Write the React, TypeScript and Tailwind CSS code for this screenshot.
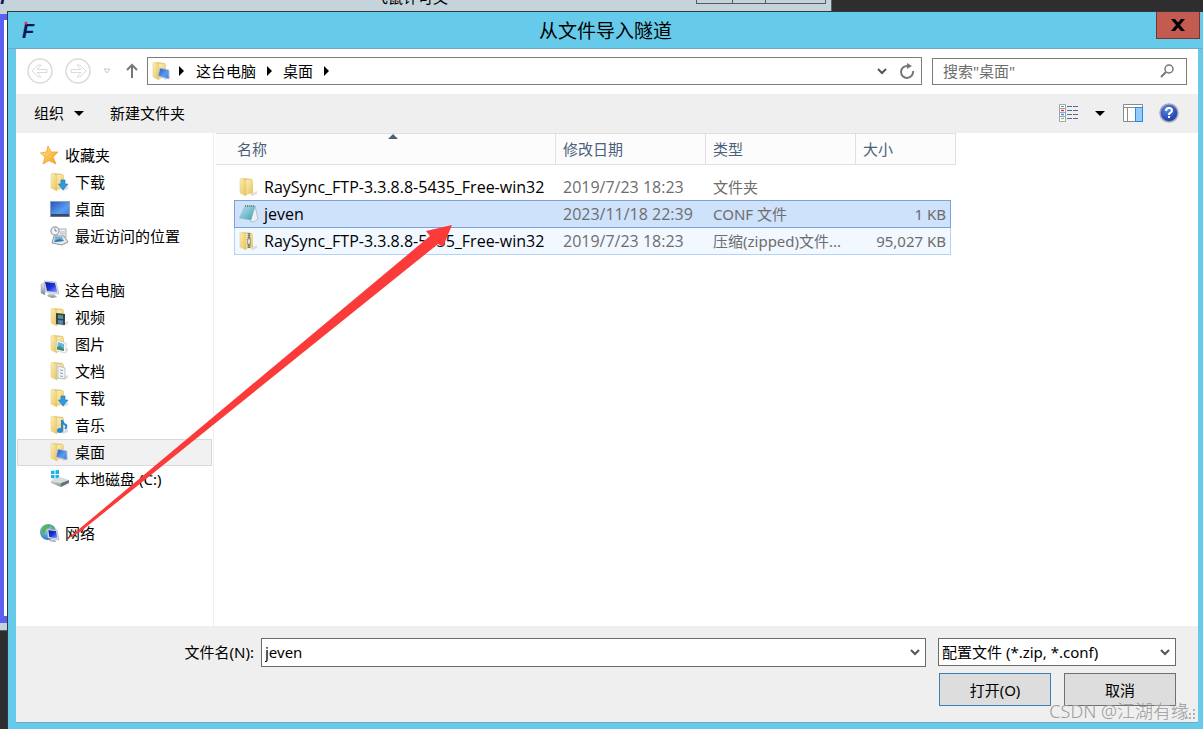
import type { ReactNode } from "react";

interface FileRow {
  name: string;
  date: string;
  type: string;
  size: string;
  icon: ReactNode;
  state: "plain" | "selected" | "focused";
}

interface PlaceItem {
  label: string;
  icon: ReactNode;
  current?: boolean;
}

interface PlaceGroup {
  label: string;
  icon: ReactNode;
  items: PlaceItem[];
}

// Gradients shared by all of the icons below
function IconDefs() {
  return (
    <svg className="absolute size-0" aria-hidden="true">
      <defs>
        <linearGradient id="folder" x1="0" y1="0" x2="1" y2="1">
          <stop offset="0" stopColor="#fcf0b8" />
          <stop offset="1" stopColor="#e8c158" />
        </linearGradient>
        <linearGradient id="screen" x1="0" y1="0" x2="1" y2="1">
          <stop offset="0" stopColor="#2455b8" />
          <stop offset="0.6" stopColor="#5b9bf0" />
          <stop offset="1" stopColor="#3d7bdc" />
        </linearGradient>
        <linearGradient id="monitor" x1="0" y1="0" x2="1" y2="1">
          <stop offset="0" stopColor="#0a18a0" />
          <stop offset="0.5" stopColor="#1c33d8" />
          <stop offset="1" stopColor="#8fb0ff" />
        </linearGradient>
        <linearGradient id="star" x1="0" y1="0" x2="1" y2="1">
          <stop offset="0" stopColor="#ffe98a" />
          <stop offset="1" stopColor="#f59a1c" />
        </linearGradient>
        <linearGradient id="metal" x1="0" y1="0" x2="0" y2="1">
          <stop offset="0" stopColor="#e4e7ea" />
          <stop offset="1" stopColor="#7d868e" />
        </linearGradient>
        <linearGradient id="paper" x1="0" y1="0" x2="1" y2="1">
          <stop offset="0" stopColor="#bfe6ee" />
          <stop offset="1" stopColor="#3a9bb4" />
        </linearGradient>
        <radialGradient id="help" cx="0.4" cy="0.3" r="0.8">
          <stop offset="0" stopColor="#5c8be8" />
          <stop offset="1" stopColor="#102c9c" />
        </radialGradient>
        <radialGradient id="globe" cx="0.4" cy="0.3" r="0.8">
          <stop offset="0" stopColor="#9fdcf5" />
          <stop offset="1" stopColor="#1766b5" />
        </radialGradient>
      </defs>
    </svg>
  );
}

function FolderIcon({ children }: { children?: ReactNode }) {
  return (
    <svg className="size-5 shrink-0" viewBox="0 0 20 20" aria-hidden="true">
      <path d="M11 17 L18 14 L18 17 L13 19 Z" fill="#d0d0d0" opacity="0.7" />
      <path d="M4 1 L13 2 L13 16 L5 16 Z" fill="#e6cb78" />
      <path d="M7 3 L14 3 L14 16 L7 18 Z" fill="url(#folder)" />
      <path d="M1 2 L3 1 L7 4 L7 19 L1 16 Z" fill="url(#folder)" stroke="#e3c877" strokeWidth="0.5" />
      {children}
    </svg>
  );
}

function DownloadsIcon() {
  return (
    <FolderIcon>
      <path d="M11 8 H15 V12 H18 L13 18 L8.500 12 H11 Z" fill="#2e9be0" stroke="#1c74b8" strokeWidth="0.6" />
    </FolderIcon>
  );
}

function VideosIcon() {
  return (
    <FolderIcon>
      <path d="M6 6 L15 7 V18 L6 17 Z" fill="#3c4146" />
      <path d="M8 8 L13 8.500 V12 L8 11.500 Z" fill="#35a0c0" />
      <path d="M8 13 L13 13.500 V17 L8 16.500 Z" fill="#3b8fc8" />
      <path d="M10 8 L12 11 M9 16 L12 14" stroke="#c77736" />
    </FolderIcon>
  );
}

function PicturesIcon() {
  return (
    <FolderIcon>
      <path d="M7 6 L16 9 V19 L6 17 Z" fill="#f6f8fa" stroke="#c2c8ce" strokeWidth="0.6" />
      <path d="M8 8 L14 10 V17 L7 15.500 Z" fill="#69b3dc" />
      <path d="M7 13 L10 12 L14 15 V17 L7 15.500 Z" fill="#4d8b65" />
    </FolderIcon>
  );
}

function DocumentsIcon() {
  return (
    <FolderIcon>
      <path d="M7 4 L10 3 V16 L7 18 Z" fill="#fff" stroke="#b8bdc2" strokeWidth="0.6" />
      <path d="M8 5 L15 7 V18 L8 17 Z" fill="#f4f5f7" stroke="#a9aeb4" strokeWidth="0.7" />
      <path d="M10 9 L13 9.500 M10 12 L13 12.500 M10 15 L13 15.500" stroke="#8fa3b8" />
    </FolderIcon>
  );
}

function MusicIcon() {
  return (
    <FolderIcon>
      <path d="M12 5 V15 M12 5 Q13 9 16 10 Q17 12 15 14" fill="none" stroke="#2389dc" strokeWidth="2" />
      <ellipse cx="10" cy="15.500" rx="3" ry="2.500" fill="#2389dc" />
    </FolderIcon>
  );
}

function DesktopFolderIcon() {
  return (
    <FolderIcon>
      <path d="M8 7 L17 9 V18 L6 15 Z" fill="url(#screen)" stroke="#b9c6d8" strokeWidth="0.8" />
    </FolderIcon>
  );
}

function StarIcon() {
  return (
    <svg className="size-5 shrink-0" viewBox="0 0 20 20" aria-hidden="true">
      <path
        d="M8 1 L11 7 L18 7 L13 12 L16 19 L9 15.500 L3 19 L5 12 L0.500 8 L6.500 7 Z"
        fill="url(#star)"
        stroke="#eda12d"
        strokeWidth="0.8"
      />
    </svg>
  );
}

function DesktopIcon() {
  return (
    <svg className="size-5 shrink-0" viewBox="0 0 20 20" aria-hidden="true">
      <rect x="0.500" y="2.500" width="19" height="15" fill="url(#screen)" stroke="#8ea0b8" />
      <rect x="1" y="15" width="18" height="2.500" fill="#3b4a63" />
    </svg>
  );
}

function RecentIcon() {
  return (
    <svg className="size-5 shrink-0" viewBox="0 0 20 20" aria-hidden="true">
      <rect x="7" y="3" width="9" height="8" fill="#f3f5f7" stroke="#a5adb5" />
      <path d="M10 6 H15 M10 8 H15" stroke="#b0b6bc" />
      <circle cx="5" cy="5" r="4" fill="#f5f7f8" stroke="#a6adb5" strokeWidth="1.500" />
      <path d="M5 2.500 V5 H7" fill="none" stroke="#75808a" />
      <path d="M4 10 L14 10 L18 16 L12 19 L2 17 Z" fill="#e4e8eb" stroke="#8b949c" />
      <path d="M5 11 L12 11 L14 15 L4 16 Z" fill="#6ab2dc" />
      <path d="M6 14 L10 13 L14 15 L4 16 Z" fill="#2b7a9e" />
    </svg>
  );
}

function ComputerIcon() {
  return (
    <svg className="size-5 shrink-0" viewBox="0 0 20 20" aria-hidden="true">
      <path d="M1 4 L5 3 V15 L1 13 Z" fill="url(#metal)" stroke="#a0a7ae" strokeWidth="0.5" />
      <path d="M4 1 L16 2 L19 14 L6 12 Z" fill="#e6e9ec" stroke="#a4aab0" strokeWidth="0.6" />
      <path d="M5 2 L15 3 L17.500 12.500 L7 11 Z" fill="url(#monitor)" />
      <path d="M9 13 L14 14 L17 17 L12 18 L7 16 Z" fill="url(#metal)" />
    </svg>
  );
}

function DiskIcon() {
  return (
    <svg className="size-5 shrink-0" viewBox="0 0 20 20" aria-hidden="true">
      <path d="M1 2 L4.500 1.500 V5 H1 Z M5.500 1.300 L9 1 V5 H5.500 Z M1 6 H4.500 V9.500 L1 9 Z M5.500 6 H9 V10 L5.500 9.600 Z" fill="#12b4ea" />
      <path d="M1 11 L10 8 L19 11 L11 14 Z" fill="#d9dde0" />
      <path d="M1 11 L11 14 L11 18 L1 14 Z" fill="url(#metal)" />
      <path d="M11 14 L19 11 V14 L11 18 Z" fill="#6a7279" />
      <circle cx="9" cy="15.500" r="1" fill="#4fdc4c" />
    </svg>
  );
}

function NetworkIcon() {
  return (
    <svg className="size-5 shrink-0" viewBox="0 0 20 20" aria-hidden="true">
      <circle cx="8" cy="9" r="8" fill="url(#globe)" />
      <path d="M3 4 Q7 0 11 2 Q9 6 6 6 Q6 10 3 11 Q0 8 3 4 Z M12 2 Q16 5 15.500 8 L12 6 Z" fill="#58b351" />
      <path d="M7 6 L17 7 L19 17 L8 15 Z" fill="#e3e7ec" stroke="#9ea7b2" strokeWidth="0.6" />
      <path d="M8.300 7.200 L16 8 L17.500 15.500 L9.300 14 Z" fill="url(#monitor)" />
      <path d="M11 16 L15 17 L16 19 L9 18 Z" fill="url(#metal)" />
    </svg>
  );
}

function NotepadIcon() {
  return (
    <svg className="size-5 shrink-0" viewBox="0 0 20 20" aria-hidden="true">
      <path d="M16 2 L19 15 L15 18 L11 17 Z" fill="#edf0f2" stroke="#9ba5ad" strokeWidth="0.6" />
      <path d="M6 2 L16 2 L12 16 L0.500 14 Z" fill="url(#paper)" stroke="#7fb8c6" strokeWidth="0.6" />
      <path d="M6 2 L16 2" stroke="#5d7680" strokeWidth="1.500" strokeDasharray="1 1" />
    </svg>
  );
}

function ZipIcon() {
  return (
    <FolderIcon>
      <path d="M10 2 V17" stroke="#8b9094" strokeWidth="3" strokeDasharray="1 1" />
      <path d="M10 2 V17" stroke="#54585c" />
      <rect x="8.500" y="8" width="3" height="5" fill="#dfe2e4" stroke="#777" strokeWidth="0.6" />
    </FolderIcon>
  );
}

function Triangle({ dir }: { dir: "down" | "right" }) {
  return (
    <svg className="size-[10px] shrink-0" viewBox="0 0 10 10" aria-hidden="true">
      <path d={dir === "down" ? "M0 3 H10 L5 8 Z" : "M3 0 V10 L8 5 Z"} fill="#000" />
    </svg>
  );
}

function Chevron() {
  return (
    <svg className="pointer-events-none size-[10px] shrink-0" viewBox="0 0 10 10" aria-hidden="true">
      <path d="M1 3 L5 7 L9 3" fill="none" stroke="#555" strokeWidth="2" />
    </svg>
  );
}

function RoundArrow({ label, flip }: { label: string; flip?: boolean }) {
  return (
    <button type="button" aria-label={label} disabled>
      <svg className={flip ? "size-[26px] -scale-x-100" : "size-[26px]"} viewBox="0 0 26 26" fill="none" stroke="#dadada">
        <circle cx="13" cy="13" r="12" strokeWidth="1.500" />
        <path d="M5 13 L11 7 H14 L10 11.500 H20 V14.500 H10 L14 19 H11 Z" />
      </svg>
    </button>
  );
}

const PLACES: PlaceGroup[] = [
  {
    label: "收藏夹",
    icon: <StarIcon />,
    items: [
      { label: "下载", icon: <DownloadsIcon /> },
      { label: "桌面", icon: <DesktopIcon /> },
      { label: "最近访问的位置", icon: <RecentIcon /> },
    ],
  },
  {
    label: "这台电脑",
    icon: <ComputerIcon />,
    items: [
      { label: "视频", icon: <VideosIcon /> },
      { label: "图片", icon: <PicturesIcon /> },
      { label: "文档", icon: <DocumentsIcon /> },
      { label: "下载", icon: <DownloadsIcon /> },
      { label: "音乐", icon: <MusicIcon /> },
      { label: "桌面", icon: <DesktopFolderIcon />, current: true },
      { label: "本地磁盘 (C:)", icon: <DiskIcon /> },
    ],
  },
  { label: "网络", icon: <NetworkIcon />, items: [] },
];

const FILES: FileRow[] = [
  {
    name: "RaySync_FTP-3.3.8.8-5435_Free-win32",
    date: "2019/7/23 18:23",
    type: "文件夹",
    size: "",
    icon: <FolderIcon />,
    state: "plain",
  },
  {
    name: "jeven",
    date: "2023/11/18 22:39",
    type: "CONF 文件",
    size: "1 KB",
    icon: <NotepadIcon />,
    state: "selected",
  },
  {
    name: "RaySync_FTP-3.3.8.8-5435_Free-win32",
    date: "2019/7/23 18:23",
    type: "压缩(zipped)文件...",
    size: "95,027 KB",
    icon: <ZipIcon />,
    state: "focused",
  },
];

const CELL_STYLES: Record<FileRow["state"], string> = {
  plain: "border-transparent",
  selected: "border-y border-[#7da2d6] bg-[#cfe2fc]",
  focused: "border-b border-[#b4d3f5] bg-[#f2f8ff]",
};

function BackgroundWindow() {
  return (
    <div className="absolute top-0 left-0 flex h-[631px] w-[832px] flex-col border-r border-b border-[#5a6268] bg-[#c4d4da]">
      <div className="flex h-[14px] shrink-0 items-end justify-between overflow-hidden pr-[5px] pb-[10px]">
        <span className="w-[42px] text-lg leading-[14px] font-bold text-[#14145a] italic">F</span>
        <span className="flex-1 pl-[331px] leading-[14px]">飞鼠许可文</span>
        <span className="flex h-[14px] w-[130px] border border-[#555c62]">
          <span className="w-[36px] border-r border-[#555c62]" />
          <span className="w-[33px] border-r border-[#555c62]" />
        </span>
      </div>
      <div className="mb-[7px] flex-1 border-t-[6px] border-b-[7px] border-l-4 border-[#5c5ff0] bg-white" />
    </div>
  );
}

function TitleBar() {
  return (
    <header className="relative flex h-[37px] shrink-0 items-center justify-center border-b border-[#74a9c4]">
      <span className="absolute top-[7px] left-[14px] font-['Liberation_Sans'] text-xl leading-6 font-bold text-[#14145a] italic">F</span>
      <svg className="absolute top-[9px] left-[16px] size-1" viewBox="0 0 4 4" aria-hidden="true">
        <circle cx="2" cy="2" r="1.500" fill="#e0383c" />
      </svg>
      <h1 className="pt-px text-[19px]">从文件导入隧道</h1>
      <button
        type="button"
        aria-label="关闭"
        className="absolute top-0 right-[3px] flex h-[27px] w-[44px] items-center justify-center border border-t-0 border-[#6e3934] bg-[#c35b50]"
      >
        <svg className="h-3 w-[14px]" viewBox="0 0 14 12" aria-hidden="true">
          <path d="M0 0 H4 L7 3.500 L10 0 H14 L9 6 L14 12 H10 L7 8.500 L4 12 H0 L5 6 Z" fill="#000" />
        </svg>
      </button>
    </header>
  );
}

function NavigationBar() {
  return (
    <nav className="flex h-[45px] shrink-0 items-center bg-white px-[11px] pb-px">
      <div className="flex shrink-0 items-center gap-3">
        <RoundArrow label="后退" />
        <RoundArrow label="前进" flip />
        <svg className="size-2" viewBox="0 0 8 8" aria-hidden="true">
          <path d="M1 2 H7 L4 6 Z" fill="none" stroke="#c8c8c8" />
        </svg>
        <button type="button" aria-label="上移" className="pl-[2px]">
          <svg className="h-4 w-[14px]" viewBox="0 0 14 16" fill="none" stroke="#777" strokeWidth="2">
            <path d="M7 15 V2 M2 7 L7 2 L12 7" />
          </svg>
        </button>
      </div>
      <div className="ml-2 flex h-7 flex-1 items-center border border-[#7c7c7c] pr-[6px] pb-px pl-1">
        <DesktopFolderIcon />
        <span className="ml-1"><Triangle dir="right" /></span>
        <a href="#computer" className="ml-[10px]">这台电脑</a>
        <span className="ml-2"><Triangle dir="right" /></span>
        <a href="#desktop" className="ml-[9px]">桌面</a>
        <span className="ml-2 flex-1"><Triangle dir="right" /></span>
        <button type="button" aria-label="历史位置" className="mr-3">
          <Chevron />
        </button>
        <button type="button" aria-label="刷新">
          <svg className="size-4" viewBox="0 0 16 16" fill="none" aria-hidden="true">
            <path d="M9 3 A6 6 0 1 0 14 8" stroke="#777" strokeWidth="2" />
            <path d="M8 0 L13 3 L8 6 Z" fill="#777" />
          </svg>
        </button>
      </div>
      <div className="ml-[10px] flex h-[27px] w-[255px] items-center border border-[#7c7c7c] px-[10px] pb-px">
        <input aria-label="搜索" placeholder='搜索"桌面"' className="min-w-0 flex-1 outline-none placeholder:text-[#6d6d6d]" />
        <svg className="mr-[2px] size-[14px]" viewBox="0 0 14 14" fill="none" stroke="#777" aria-hidden="true">
          <circle cx="9" cy="5" r="4" strokeWidth="1.500" />
          <path d="M6 8 L1 13" strokeWidth="2" />
        </svg>
      </div>
    </nav>
  );
}

function Toolbar() {
  return (
    <div className="flex h-[39px] shrink-0 items-center bg-[#efefef] pr-[19px] pb-[2px] pl-[18px]">
      <button type="button" className="flex items-center gap-[10px]">
        组织
        <Triangle dir="down" />
      </button>
      <button type="button" className="ml-[26px]">新建文件夹</button>
      <div className="ml-auto flex items-center">
        <button type="button" aria-label="更改视图">
          <svg className="h-[18px] w-5" viewBox="0 0 20 18" fill="none" aria-hidden="true">
            <path d="M0.500 0.500 H6.500 V17.500 H0.500 Z M0.500 4.500 H6.500 M0.500 8.500 H6.500 M0.500 12.500 H6.500" fill="#fff" stroke="#9aa6b8" />
            <path d="M2 2.500 H5" stroke="#5f9c62" />
            <path d="M2 6.500 H5" stroke="#e23c2c" strokeWidth="1.500" />
            <path d="M2 10.500 H5" stroke="#3d8de0" strokeWidth="1.500" />
            <path d="M2 14.500 H5" stroke="#a8c43a" strokeWidth="1.500" />
            <path d="M8 2.500 H19 M8 6.500 H19 M8 10.500 H19 M8 14.500 H19" stroke="#5c6c86" strokeDasharray="5 1" />
          </svg>
        </button>
        <button type="button" aria-label="更多选项" className="ml-4">
          <Triangle dir="down" />
        </button>
        <button type="button" aria-label="显示预览窗格" className="ml-[18px]">
          <svg className="h-[18px] w-5" viewBox="0 0 20 18" fill="none" aria-hidden="true">
            <path d="M0.500 0.500 H19.500 V17.500 H0.500 Z M0.500 3.500 H19.500 M4.500 3.500 V17.500" fill="#fff" stroke="#8a8a8a" />
            <rect x="12.500" y="3.500" width="7" height="14" fill="#93cbfb" stroke="#2f88e0" />
          </svg>
        </button>
        <button type="button" aria-label="获取帮助" className="ml-4">
          <svg className="size-5" viewBox="0 0 20 20" aria-hidden="true">
            <circle cx="10" cy="10" r="9" fill="url(#help)" stroke="#a5a9b4" strokeWidth="1.500" />
            <path d="M7 8 Q7 5 10 5 Q13 5 13 7.500 Q13 9 11 10 Q10 10.500 10 12" fill="none" stroke="#fff" strokeWidth="2" />
            <rect x="9" y="13" width="2" height="2" fill="#fff" />
          </svg>
        </button>
      </div>
    </div>
  );
}

function Sidebar() {
  return (
    <aside className="w-[198px] shrink-0 border-r border-[#f0f0f0] px-px pt-[9px]">
      {PLACES.map((group) => (
        <div key={group.label} className="mb-[27px]">
          <a href={`#${group.label}`} className="flex h-[27px] items-center gap-[5px] pb-px pl-[23px]">
            {group.icon}
            {group.label}
          </a>
          {group.items.map((item) => (
            <a
              key={item.label}
              href={`#${item.label}`}
              className={`flex h-[27px] items-center gap-[5px] border pb-px pl-8 ${
                item.current ? "border-[#d9d9d9] bg-[#f1f1f1]" : "border-transparent"
              }`}
            >
              {item.icon}
              {item.label}
            </a>
          ))}
        </div>
      ))}
    </aside>
  );
}

function FileTable() {
  const head = "relative h-8 border-y border-r border-[#e0e0e0] bg-[#fcfcfc] pl-[7px] text-left font-normal";

  return (
    <table className="ml-[2px] w-[740px] table-fixed border-separate border-spacing-0">
      <colgroup>
        <col className="w-[18px]" />
        <col />
        <col className="w-[150px]" />
        <col className="w-[150px]" />
        <col className="w-[95px]" />
        <col className="w-[5px]" />
      </colgroup>
      <thead className="text-[#4c607a]">
        <tr>
          <th colSpan={2} className="relative h-8 border-y border-r border-[#e0e0e0] bg-[#fcfcfc] pl-[21px] text-left font-normal">
            名称
            <svg className="absolute top-0 left-[172px] h-[5px] w-[10px]" viewBox="0 0 10 5" aria-hidden="true">
              <path d="M0 5 L5 0 L10 5 Z" fill="#4c607a" />
            </svg>
          </th>
          <th className={head}>修改日期</th>
          <th className={head}>类型</th>
          <th colSpan={2} className={head}>大小</th>
        </tr>
      </thead>
      <tbody className="text-[#6d6d6d]">
        <tr className="h-2">
          <td colSpan={6} />
        </tr>
        {FILES.map((file) => {
          const cell = CELL_STYLES[file.state];
          const side = file.state !== "plain";
          return (
            <tr key={file.type} className={file.state === "selected" ? "h-7" : "h-[27px]"}>
              <td />
              <td className={`${cell} p-0 ${side ? "border-l" : "pl-px"}`}>
                <span className="flex items-center gap-[5px] pl-1 font-['Open_Sans'] text-base leading-5 whitespace-nowrap text-black">
                  {file.icon}
                  {file.name}
                </span>
              </td>
              <td className={`${cell} py-0 pr-0 pl-[7px] font-['Open_Sans'] text-base leading-5 whitespace-nowrap`}>{file.date}</td>
              <td className={`${cell} py-0 pr-0 pl-[7px] whitespace-nowrap`}>{file.type}</td>
              <td className={`${cell} py-0 pr-1 pl-0 text-right whitespace-nowrap ${side ? "border-r" : ""}`}>{file.size}</td>
              <td />
            </tr>
          );
        })}
      </tbody>
    </table>
  );
}

function Footer() {
  const button = "h-[33px] w-28 border bg-[#dddddd]";

  return (
    <footer className="relative flex h-[97px] shrink-0 flex-col items-end gap-[6px] border-b border-[#74a9c4] bg-[#efefef] pt-[12px] pr-[22px]">
      <div className="flex w-full items-start">
        <label htmlFor="filename" className="w-[245px] shrink-0 pt-1 pr-[7px] text-right">文件名(N):</label>
        <div className="flex h-[29px] flex-1 items-center border border-[#6b6b6b] bg-white pr-[5px] pb-px">
          <input id="filename" defaultValue="jeven" className="min-w-0 flex-1 pl-[3px] outline-none" />
          <button type="button" aria-label="最近的文件名">
            <Chevron />
          </button>
        </div>
        <div className="ml-3 flex h-7 w-[238px] items-center border border-[#6b6b6b] bg-white pr-[5px]">
          <select aria-label="文件类型" className="h-[26px] min-w-0 flex-1 appearance-none pl-[3px] outline-none">
            <option>配置文件 (*.zip, *.conf)</option>
          </select>
          <Chevron />
        </div>
      </div>
      <div className="flex gap-[13px]">
        <button type="button" className={`${button} border-[#3c7fb1]`}>打开(O)</button>
        <button type="button" className={`${button} border-[#707070]`}>取消</button>
      </div>
      <svg className="absolute right-[2px] bottom-[2px] size-[11px]" viewBox="0 0 11 11" fill="#b0b0b0" aria-hidden="true">
        <path d="M8 0 h2 v2 h-2 Z M8 4 h2 v2 h-2 Z M8 8 h2 v2 h-2 Z M4 4 h2 v2 h-2 Z M4 8 h2 v2 h-2 Z M0 8 h2 v2 h-2 Z" />
      </svg>
    </footer>
  );
}

export default function App() {
  return (
    <div className="relative flex h-screen flex-col overflow-hidden bg-[#2e2e2e] pt-[11px] pl-[7px] font-['Noto_Sans','Noto_Sans_CJK_SC',sans-serif] text-[15px] leading-5 text-black">
      <IconDefs />
      <BackgroundWindow />

      <div className="relative flex flex-1 flex-col border-t border-l border-[#2b3a42] bg-[#66cbea]">
        <TitleBar />
        <div className="mr-[5px] mb-[6px] ml-2 flex flex-1 flex-col">
          <NavigationBar />
          <Toolbar />
          <main className="flex flex-1 bg-white">
            <Sidebar />
            <div className="flex-1">
              <FileTable />
            </div>
          </main>
          <Footer />
        </div>
      </div>

      {/* Annotation drawn over the dialog */}
      <svg className="pointer-events-none absolute top-[225px] left-[67px] h-[314px] w-[385px]" viewBox="67 225 385 314" aria-hidden="true">
        <path d="M67 539 L78 530 L430 236 L426 231 L452 225 L443 247 L438 244 L80 532 Z" fill="#fb3a3a" />
      </svg>
      <span className="pointer-events-none absolute right-[14px] bottom-[6px] text-lg leading-6 font-light text-[#9a9a9a]">
        CSDN @江湖有缘
      </span>
    </div>
  );
}
